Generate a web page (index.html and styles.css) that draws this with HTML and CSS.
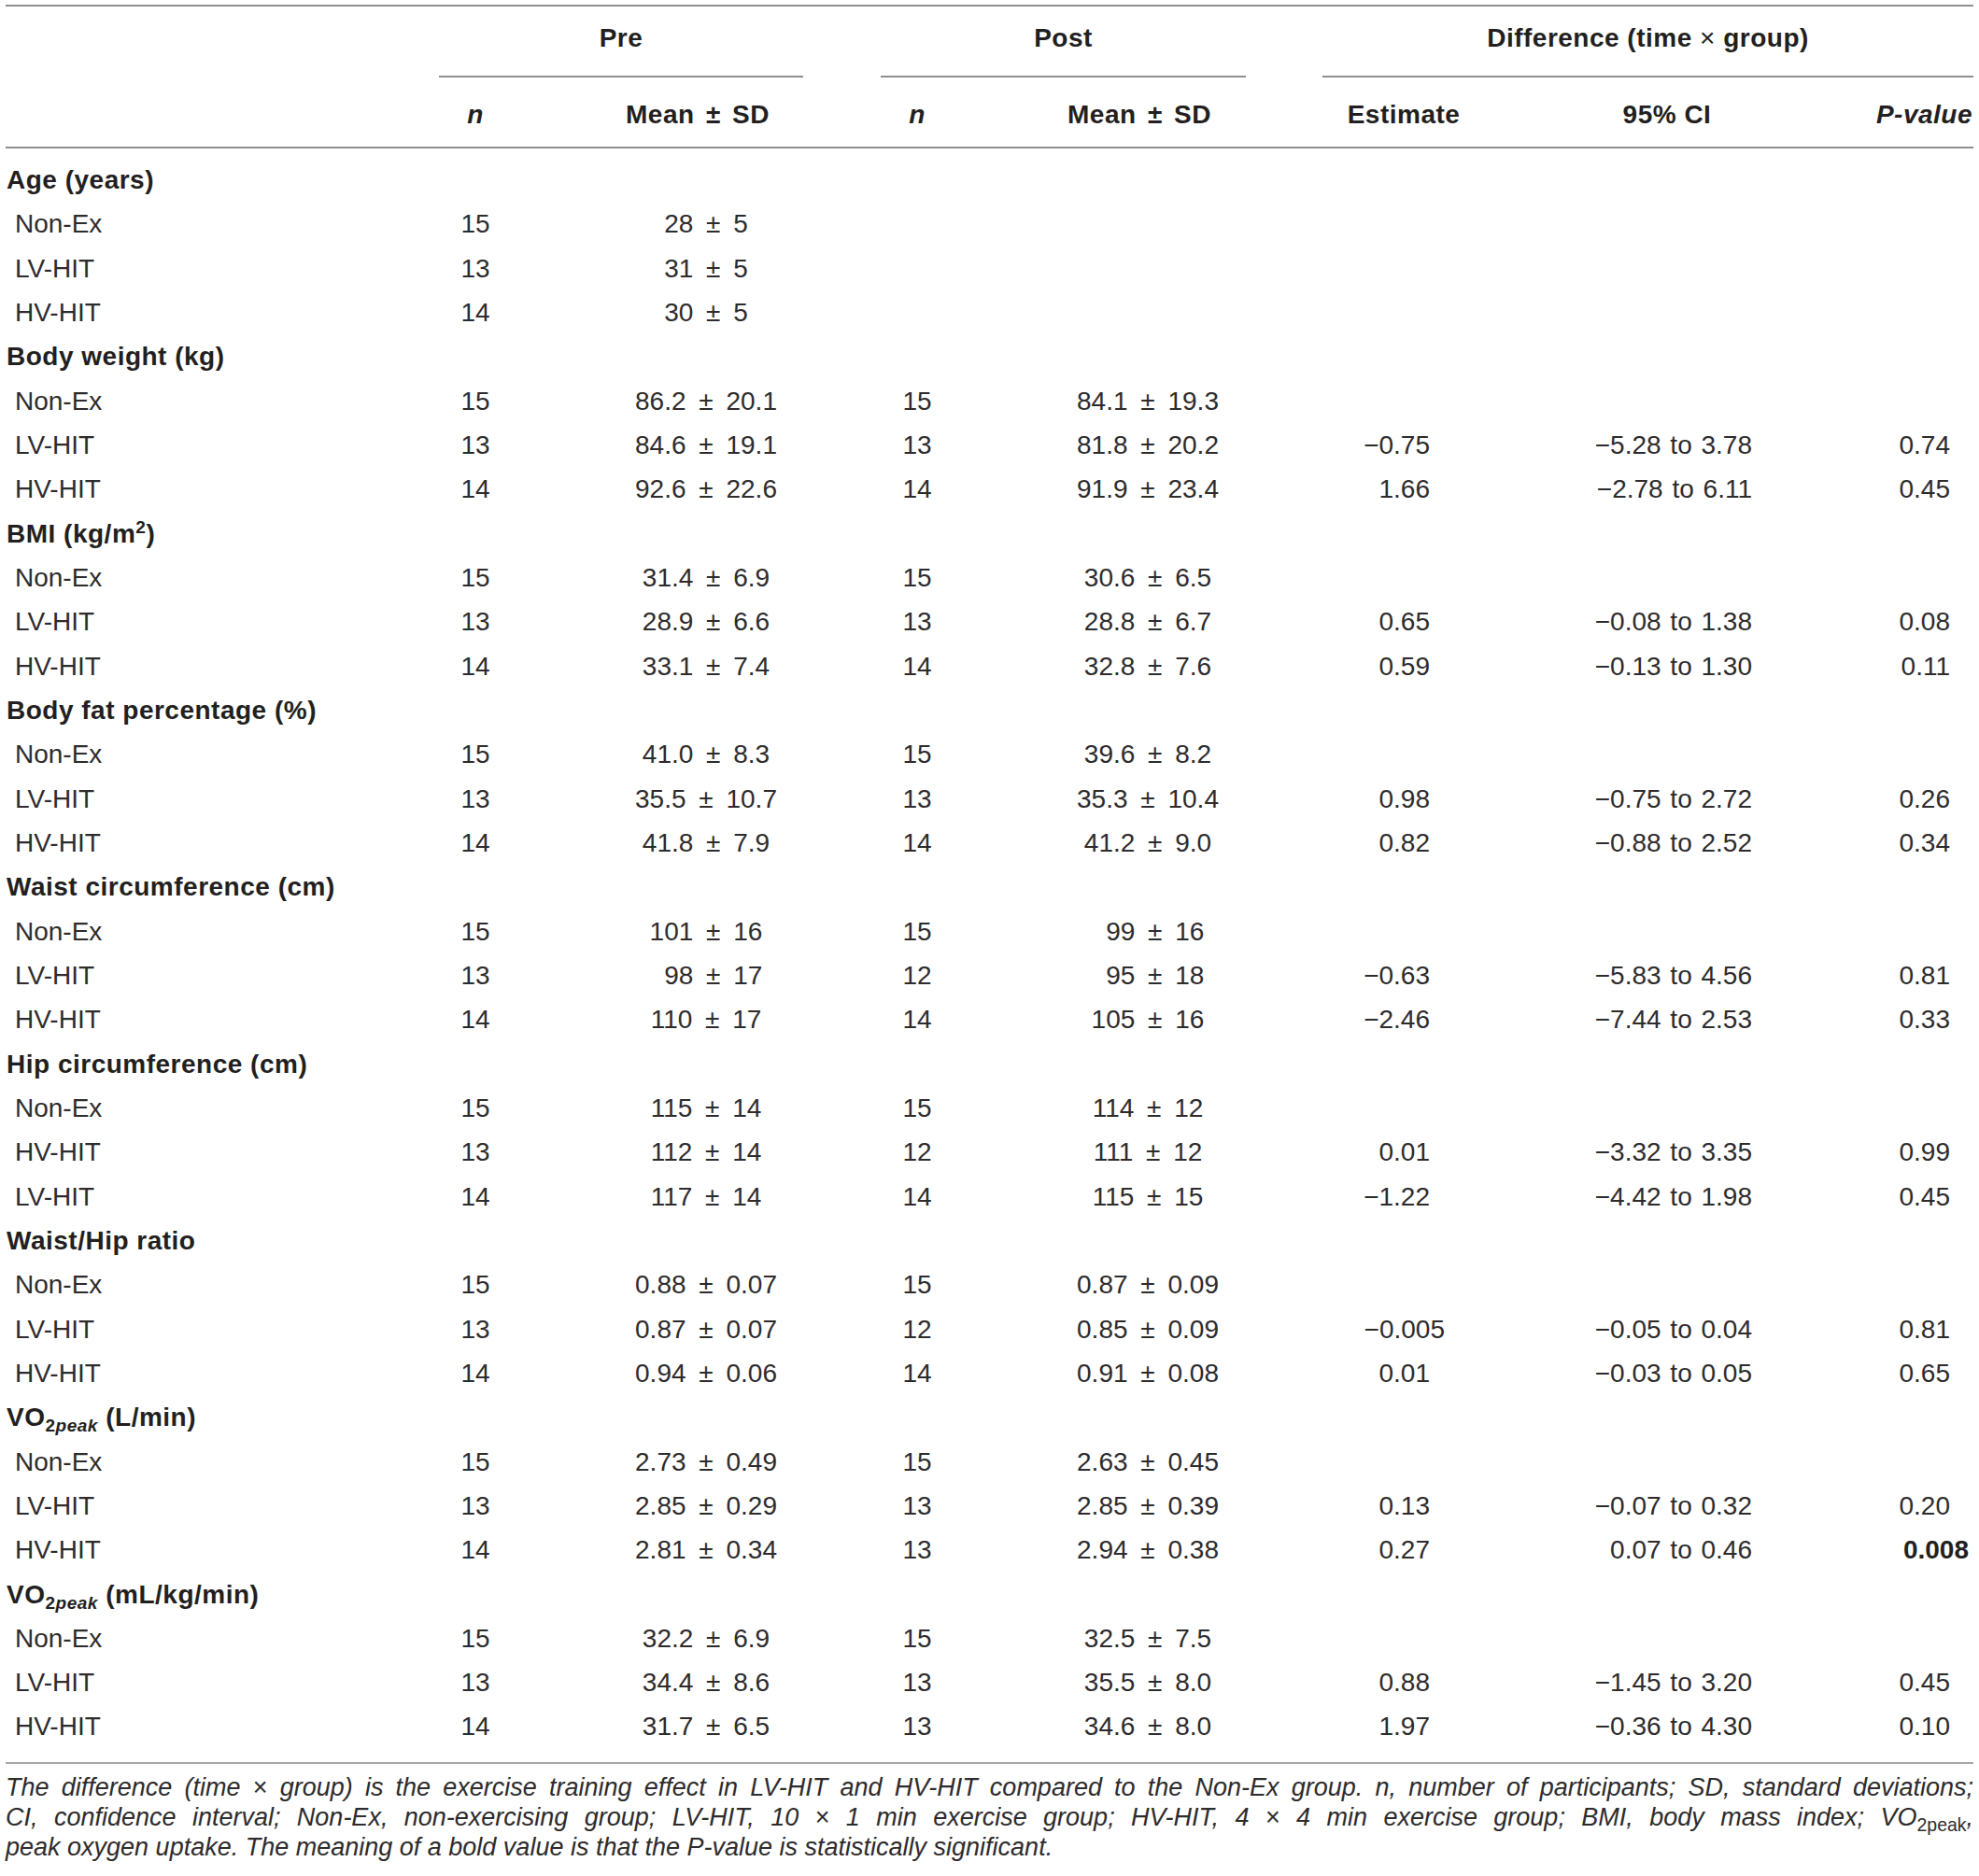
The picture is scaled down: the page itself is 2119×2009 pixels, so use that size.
FILE: index.html
```html
<!DOCTYPE html>
<html lang="en">
<head>
  <meta charset="UTF-8" />
  <title>Table – anthropometrics and VO2peak</title>
  <link rel="stylesheet" href="styles.css">
</head>
<body>
  <div class="page">
    <table class="data">
      <colgroup>
        <col class="c-label">
        <col class="c-n1">
        <col class="c-m1">
        <col class="c-n2">
        <col class="c-m2">
        <col class="c-est">
        <col class="c-ci">
        <col class="c-p">
      </colgroup>
      <thead>
        <tr class="groups">
          <th></th>
          <th colspan="2"><div class="grp grp-pre">Pre</div></th>
          <th colspan="2"><div class="grp grp-post">Post</div></th>
          <th colspan="3"><div class="grp grp-diff">Difference (time <span class="times">×</span> group)</div></th>
        </tr>
        <tr class="heads">
          <th></th>
          <th><i>n</i></th>
          <th class="h-mean">Mean ± SD</th>
          <th><i>n</i></th>
          <th class="h-mean">Mean ± SD</th>
          <th>Estimate</th>
          <th class="h-ci">95% CI</th>
          <th class="h-p"><i>P-value</i></th>
        </tr>
      </thead>
      <tbody>
        <tr class="cat"><td colspan="8">Age (years)</td></tr>
        <tr><td class="grp-name">Non-Ex</td><td>15</td><td class="mean">28 ± 5</td><td></td><td></td><td></td><td></td><td></td></tr>
        <tr><td class="grp-name">LV-HIT</td><td>13</td><td class="mean">31 ± 5</td><td></td><td></td><td></td><td></td><td></td></tr>
        <tr><td class="grp-name">HV-HIT</td><td>14</td><td class="mean">30 ± 5</td><td></td><td></td><td></td><td></td><td></td></tr>

        <tr class="cat"><td colspan="8">Body weight (kg)</td></tr>
        <tr><td class="grp-name">Non-Ex</td><td>15</td><td class="mean">86.2 ± 20.1</td><td>15</td><td class="mean">84.1 ± 19.3</td><td></td><td></td><td></td></tr>
        <tr><td class="grp-name">LV-HIT</td><td>13</td><td class="mean">84.6 ± 19.1</td><td>13</td><td class="mean">81.8 ± 20.2</td><td class="est">−0.75</td><td class="ci">−5.28 to 3.78</td><td class="pv">0.74</td></tr>
        <tr><td class="grp-name">HV-HIT</td><td>14</td><td class="mean">92.6 ± 22.6</td><td>14</td><td class="mean">91.9 ± 23.4</td><td class="est">1.66</td><td class="ci">−2.78 to 6.11</td><td class="pv">0.45</td></tr>

        <tr class="cat"><td colspan="8">BMI (kg/m<sup>2</sup>)</td></tr>
        <tr><td class="grp-name">Non-Ex</td><td>15</td><td class="mean">31.4 ± 6.9</td><td>15</td><td class="mean">30.6 ± 6.5</td><td></td><td></td><td></td></tr>
        <tr><td class="grp-name">LV-HIT</td><td>13</td><td class="mean">28.9 ± 6.6</td><td>13</td><td class="mean">28.8 ± 6.7</td><td class="est">0.65</td><td class="ci">−0.08 to 1.38</td><td class="pv">0.08</td></tr>
        <tr><td class="grp-name">HV-HIT</td><td>14</td><td class="mean">33.1 ± 7.4</td><td>14</td><td class="mean">32.8 ± 7.6</td><td class="est">0.59</td><td class="ci">−0.13 to 1.30</td><td class="pv">0.11</td></tr>

        <tr class="cat"><td colspan="8">Body fat percentage (%)</td></tr>
        <tr><td class="grp-name">Non-Ex</td><td>15</td><td class="mean">41.0 ± 8.3</td><td>15</td><td class="mean">39.6 ± 8.2</td><td></td><td></td><td></td></tr>
        <tr><td class="grp-name">LV-HIT</td><td>13</td><td class="mean">35.5 ± 10.7</td><td>13</td><td class="mean">35.3 ± 10.4</td><td class="est">0.98</td><td class="ci">−0.75 to 2.72</td><td class="pv">0.26</td></tr>
        <tr><td class="grp-name">HV-HIT</td><td>14</td><td class="mean">41.8 ± 7.9</td><td>14</td><td class="mean">41.2 ± 9.0</td><td class="est">0.82</td><td class="ci">−0.88 to 2.52</td><td class="pv">0.34</td></tr>

        <tr class="cat"><td colspan="8">Waist circumference (cm)</td></tr>
        <tr><td class="grp-name">Non-Ex</td><td>15</td><td class="mean">101 ± 16</td><td>15</td><td class="mean">&#8199;99 ± 16</td><td></td><td></td><td></td></tr>
        <tr><td class="grp-name">LV-HIT</td><td>13</td><td class="mean">&#8199;98 ± 17</td><td>12</td><td class="mean">&#8199;95 ± 18</td><td class="est">−0.63</td><td class="ci">−5.83 to 4.56</td><td class="pv">0.81</td></tr>
        <tr><td class="grp-name">HV-HIT</td><td>14</td><td class="mean">110 ± 17</td><td>14</td><td class="mean">105 ± 16</td><td class="est">−2.46</td><td class="ci">−7.44 to 2.53</td><td class="pv">0.33</td></tr>

        <tr class="cat"><td colspan="8">Hip circumference (cm)</td></tr>
        <tr><td class="grp-name">Non-Ex</td><td>15</td><td class="mean">115 ± 14</td><td>15</td><td class="mean">114 ± 12</td><td></td><td></td><td></td></tr>
        <tr><td class="grp-name">HV-HIT</td><td>13</td><td class="mean">112 ± 14</td><td>12</td><td class="mean">111 ± 12</td><td class="est">0.01</td><td class="ci">−3.32 to 3.35</td><td class="pv">0.99</td></tr>
        <tr><td class="grp-name">LV-HIT</td><td>14</td><td class="mean">117 ± 14</td><td>14</td><td class="mean">115 ± 15</td><td class="est">−1.22</td><td class="ci">−4.42 to 1.98</td><td class="pv">0.45</td></tr>

        <tr class="cat"><td colspan="8">Waist/Hip ratio</td></tr>
        <tr><td class="grp-name">Non-Ex</td><td>15</td><td class="mean">0.88 ± 0.07</td><td>15</td><td class="mean">0.87 ± 0.09</td><td></td><td></td><td></td></tr>
        <tr><td class="grp-name">LV-HIT</td><td>13</td><td class="mean">0.87 ± 0.07</td><td>12</td><td class="mean">0.85 ± 0.09</td><td class="est est-long">−0.005</td><td class="ci">−0.05 to 0.04</td><td class="pv">0.81</td></tr>
        <tr><td class="grp-name">HV-HIT</td><td>14</td><td class="mean">0.94 ± 0.06</td><td>14</td><td class="mean">0.91 ± 0.08</td><td class="est">0.01</td><td class="ci">−0.03 to 0.05</td><td class="pv">0.65</td></tr>

        <tr class="cat"><td colspan="8">VO<sub>2<i>peak</i></sub> (L/min)</td></tr>
        <tr><td class="grp-name">Non-Ex</td><td>15</td><td class="mean">2.73 ± 0.49</td><td>15</td><td class="mean">2.63 ± 0.45</td><td></td><td></td><td></td></tr>
        <tr><td class="grp-name">LV-HIT</td><td>13</td><td class="mean">2.85 ± 0.29</td><td>13</td><td class="mean">2.85 ± 0.39</td><td class="est">0.13</td><td class="ci">−0.07 to 0.32</td><td class="pv">0.20</td></tr>
        <tr><td class="grp-name">HV-HIT</td><td>14</td><td class="mean">2.81 ± 0.34</td><td>13</td><td class="mean">2.94 ± 0.38</td><td class="est">0.27</td><td class="ci">0.07 to 0.46</td><td class="pv pv-bold">0.008</td></tr>

        <tr class="cat"><td colspan="8">VO<sub>2<i>peak</i></sub> (mL/kg/min)</td></tr>
        <tr><td class="grp-name">Non-Ex</td><td>15</td><td class="mean">32.2 ± 6.9</td><td>15</td><td class="mean">32.5 ± 7.5</td><td></td><td></td><td></td></tr>
        <tr><td class="grp-name">LV-HIT</td><td>13</td><td class="mean">34.4 ± 8.6</td><td>13</td><td class="mean">35.5 ± 8.0</td><td class="est">0.88</td><td class="ci">−1.45 to 3.20</td><td class="pv">0.45</td></tr>
        <tr><td class="grp-name">HV-HIT</td><td>14</td><td class="mean">31.7 ± 6.5</td><td>13</td><td class="mean">34.6 ± 8.0</td><td class="est">1.97</td><td class="ci">−0.36 to 4.30</td><td class="pv">0.10</td></tr>
      </tbody>
    </table>

    <div class="note">
      <span class="note-line">The difference (time <span class="times">×</span> group) is the exercise training effect in LV-HIT and HV-HIT compared to the Non-Ex group. n, number of participants; SD, standard deviations;</span>
      <span class="note-line">CI, confidence interval; Non-Ex, non-exercising group; LV-HIT, 10 <span class="times">×</span> 1 min exercise group; HV-HIT, 4 <span class="times">×</span> 4 min exercise group; BMI, body mass index; VO<sub class="up">2peak</sub>,</span>
      <span class="note-line last">peak oxygen uptake. The meaning of a bold value is that the P-value is statistically significant.</span>
    </div>
  </div>
</body>
</html>
```

FILE: styles.css
```css
body {
  margin: 0;
  background: #fff;
  color: #231f20;
  font-family: "Liberation Sans", Arial, sans-serif;
}

.page {
  padding: 5px 6px 0 6px;
}

.data {
  width: 2107px;
  table-layout: fixed;
  border-collapse: collapse;
  border-top: 2px solid #8f8f8f;
  border-bottom: 2px solid #a9a9a9;
  font-size: 28px;
}

.c-label { width: 434px; }
.c-n1 { width: 138px; }
.c-m1 { width: 338px; }
.c-n2 { width: 132px; }
.c-m2 { width: 344px; }
.c-est { width: 222px; }
.c-ci { width: 393px; }
.c-p { width: 106px; }

th {
  padding: 0;
  font-weight: bold;
  text-align: center;
  white-space: nowrap;
  letter-spacing: 0.5px;
}

/* group titles with their own short rule */
.groups th {
  vertical-align: bottom;
}

.grp {
  line-height: 68px;
  padding-bottom: 6px;
  border-bottom: 2px solid #8f8f8f;
}

.grp-pre { margin: 0 56px 0 30px; }
.grp-post { margin: 0 58px 0 27px; }
.grp-diff { margin: 0 0 0 24px; }

.times {
  font-weight: normal;
  font-style: normal;
}

.heads th {
  padding-top: 6px;
  line-height: 68px;
  border-bottom: 2px solid #8f8f8f;
}

.heads .h-mean { word-spacing: 4px; }

.heads .h-ci { padding-right: 51px; }

.heads .h-p {
  text-align: right;
  padding-right: 1px;
}

td {
  padding: 0;
  line-height: 47.33px;
  text-align: center;
  white-space: nowrap;
  color: #2e2b2c;
}

tbody tr:first-child td { padding-top: 10px; }
tbody tr:last-child td { padding-bottom: 14px; }

.cat td {
  text-align: left;
  font-weight: bold;
  padding-left: 1px;
  letter-spacing: 0.5px;
  color: #231f20;
}

td.grp-name {
  text-align: left;
  padding-left: 10px;
}

td.mean {
  padding-left: 18px;
  word-spacing: 6px;
}

td.est {
  text-align: right;
  padding-right: 83px;
}

td.est-long { padding-right: 67px; }

td.ci {
  text-align: right;
  padding-right: 131px;
  word-spacing: 2px;
}

td.pv {
  text-align: right;
  padding-right: 25px;
}

td.pv-bold {
  font-weight: bold;
  padding-right: 5px;
  color: #231f20;
}

sup, sub {
  line-height: 0;
  font-size: 0.68em;
}

sup { vertical-align: 0.55em; }
sub { vertical-align: -0.3em; }

.note {
  margin-top: 9px;
  font-size: 27px;
  font-style: italic;
  color: #2e2b2c;
}

.note-line {
  display: block;
  height: 32px;
  line-height: 32px;
  text-align: justify;
  text-align-last: justify;
}

.note-line.last {
  text-align-last: left;
}

.note .up {
  font-style: normal;
  font-size: 0.72em;
}
```
